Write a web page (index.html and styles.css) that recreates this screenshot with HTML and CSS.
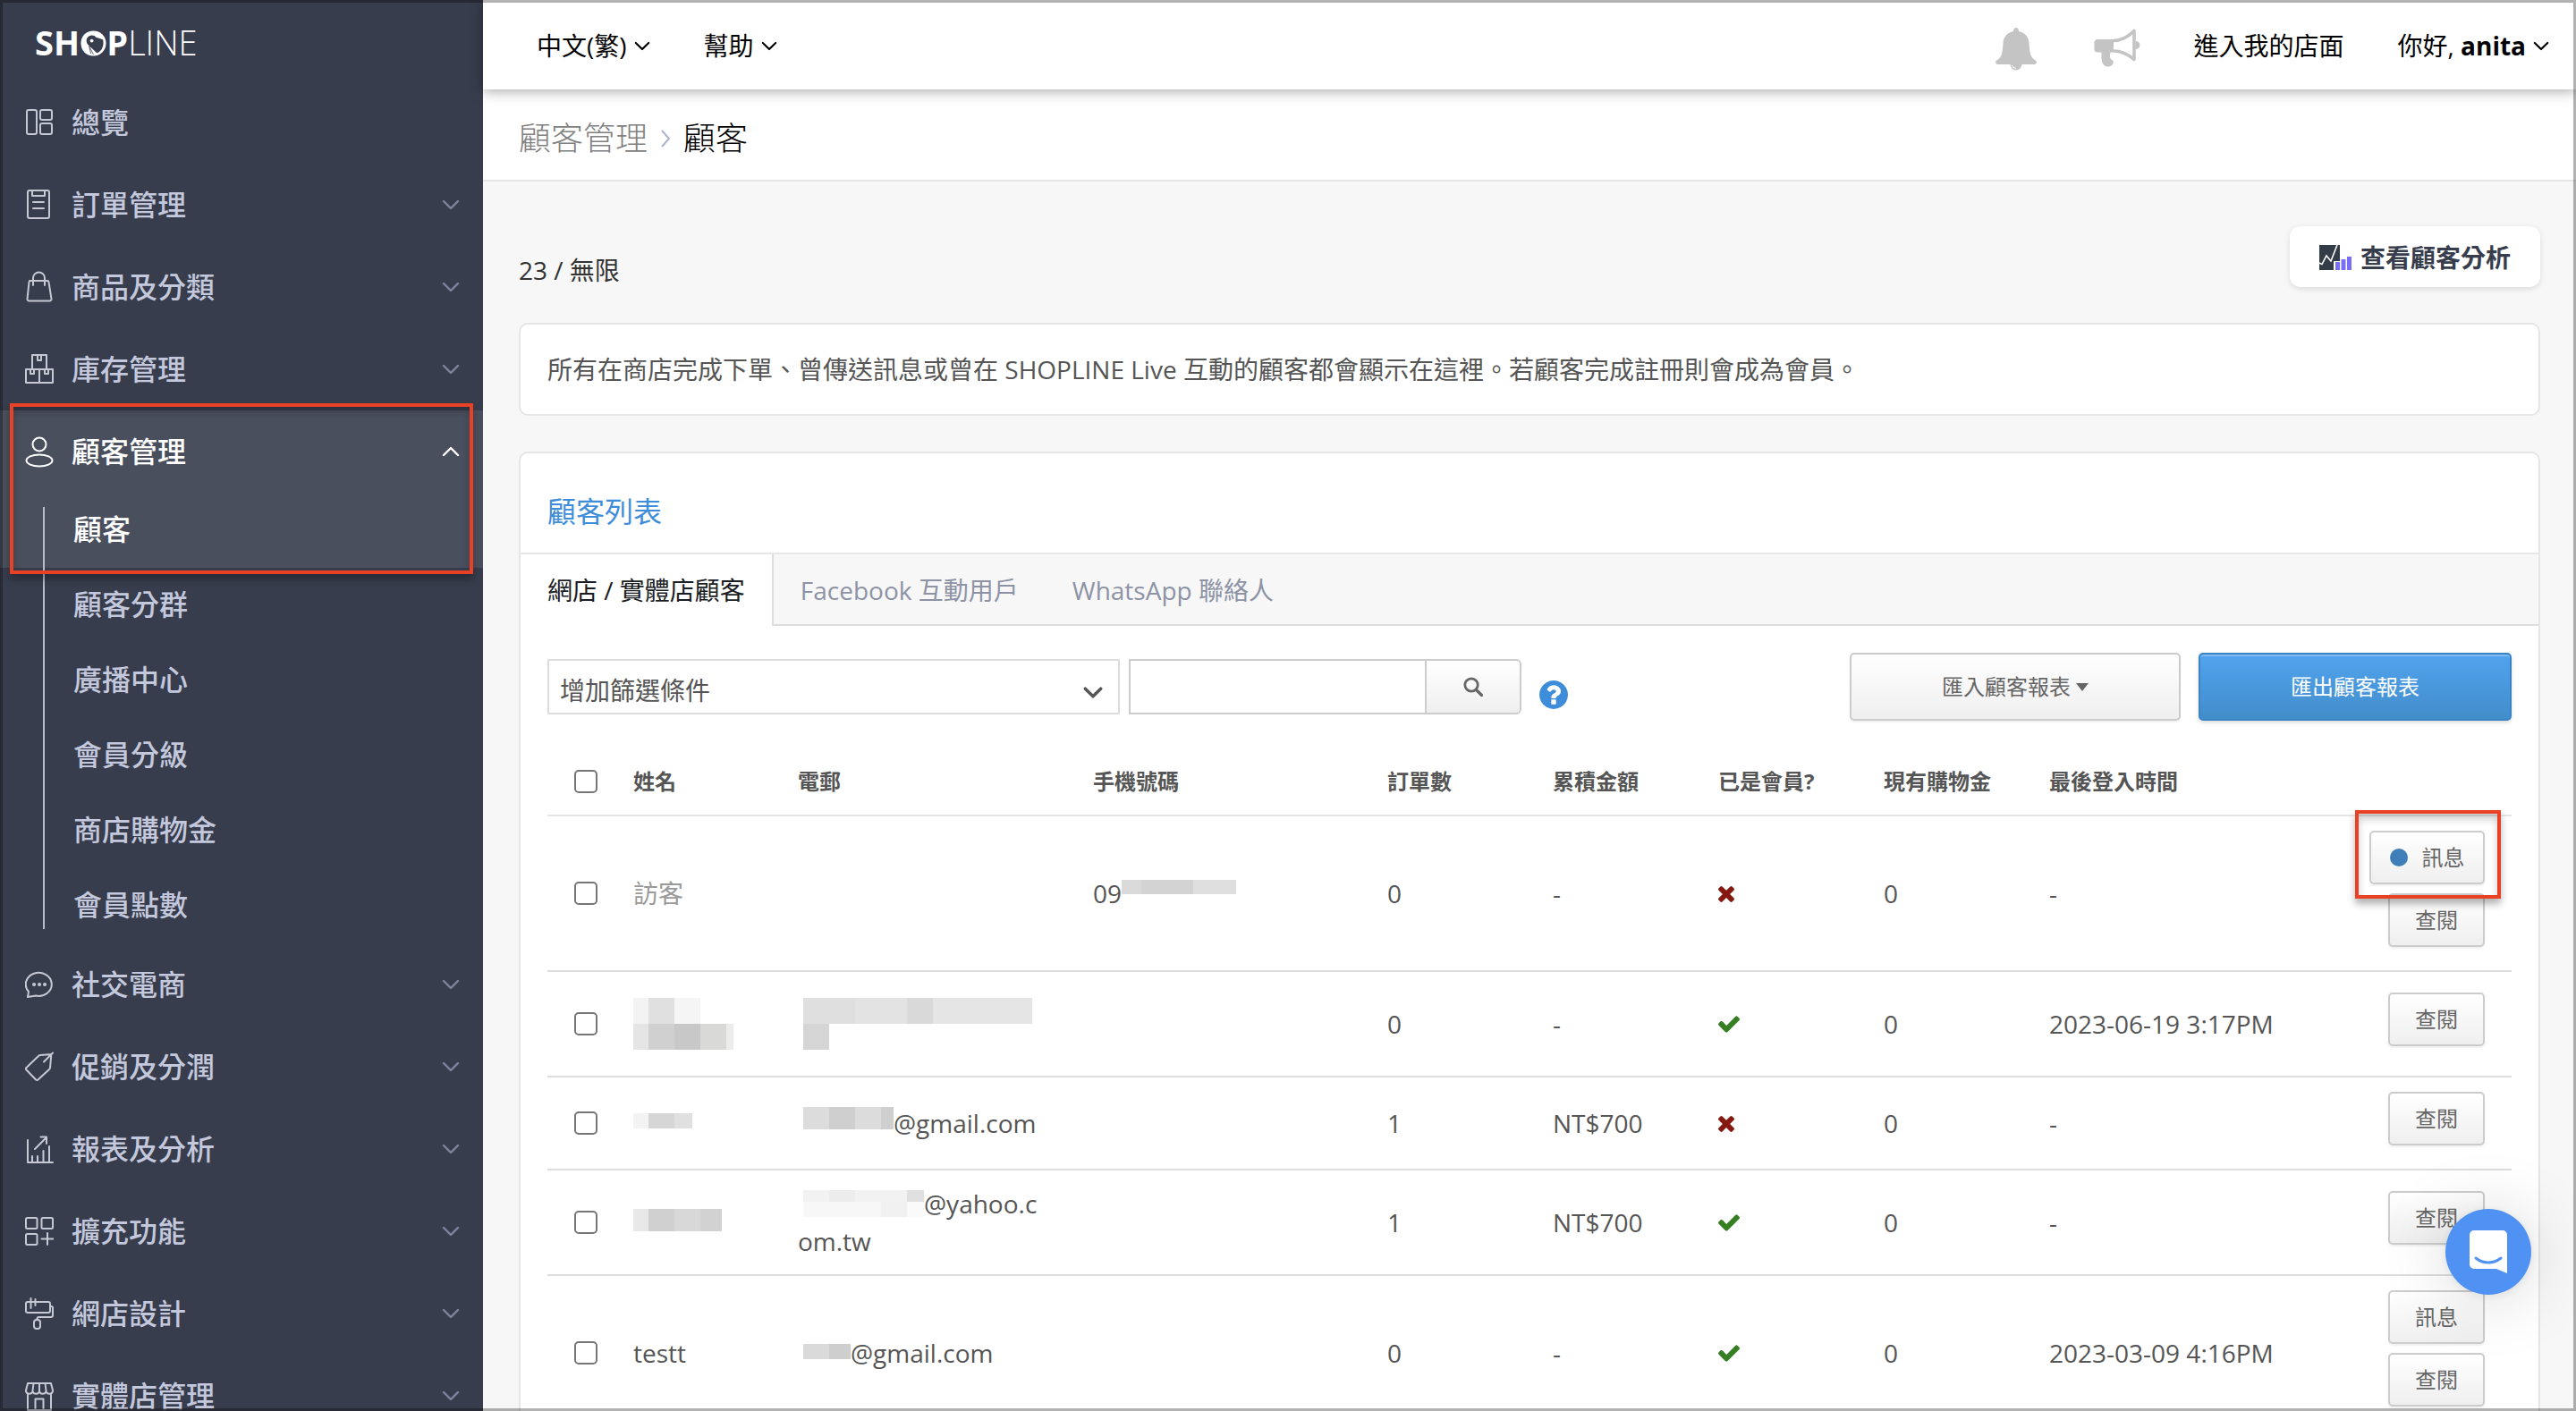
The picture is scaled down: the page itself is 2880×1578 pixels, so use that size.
FILE: index.html
```html
<!DOCTYPE html>
<html lang="zh-Hant">
<head>
<meta charset="utf-8">
<meta name="viewport" content="width=device-width, initial-scale=1">
<title>顧客 - SHOPLINE</title>
<link rel="stylesheet" href="styles.css">
</head>
<body>
<svg class="defs" width="0" height="0" aria-hidden="true">
  <symbol id="chevron" viewBox="0 0 20 12"><path d="M2 2l8 8 8-8" fill="none" stroke="currentColor" stroke-width="2.4" stroke-linecap="round" stroke-linejoin="round"/></symbol>
  <symbol id="check" viewBox="121 0 1550 1792"><path fill="currentColor" d="M1671 566q0 40-28 68l-724 724-136 136q-28 28-68 28t-68-28l-136-136-362-362q-28-28-28-68t28-68l136-136q28-28 68-28t68 28l294 295 656-657q28-28 68-28t68 28l136 136q28 28 28 68z"/></symbol>
  <symbol id="times" viewBox="302 0 1188 1792"><path fill="currentColor" d="M1490 1322q0 40-28 68l-136 136q-28 28-68 28t-68-28l-294-294-294 294q-28 28-68 28t-68-28l-136-136q-28-28-28-68t28-68l294-294-294-294q-28-28-28-68t28-68l136-136q28-28 68-28t68 28l294 294 294-294q28-28 68-28t68 28l136 136q28 28 28 68t-28 68l-294 294 294 294q28 28 28 68z"/></symbol>
</svg>

<div class="app">
  <aside class="sidebar">
    <a class="logo" href="#"><b>SH<span class="logo-o">O<svg class="logo-ball" viewBox="0 0 30 30" aria-hidden="true"><circle cx="15" cy="15" r="14.5" fill="#fff"/><path d="M7 10C9 5.500 15 4 18 8l8 2.500c1.500 7-1 13-6.500 15.500L10 17.500C7.500 16 6.500 13 7 10z" fill="#383d4d"/><circle cx="13" cy="12" r="2" fill="#fff"/><path d="M10 18l2 9M10 18l5 10M11 18l8 8" stroke="#383d4d" stroke-width=".8"/></svg></span>P</b>LINE</a>
    <nav class="nav" aria-label="主選單">
      <a class="nav-row" href="#"><svg class="nav-icon" viewBox="0 0 32 36"><rect x="2" y="4" width="11" height="27" rx="2"/><rect x="17" y="4" width="13" height="11" rx="2"/><rect x="17" y="19" width="13" height="12" rx="2"/></svg><span>總覽</span></a>
      <a class="nav-row" href="#"><svg class="nav-icon" viewBox="0 0 32 36"><rect x="3" y="2" width="24" height="31" rx="2"/><path d="M8 2v6h14V2M9 15h12M9 22h12"/></svg><span>訂單管理</span><svg class="nav-arrow"><use href="#chevron"/></svg></a>
      <a class="nav-row" href="#"><svg class="nav-icon" viewBox="0 0 32 36"><path d="M5 11h20a1.500 1.500 0 0 1 1.500 1.300l3 19a2 2 0 0 1-2 2.200H4.500a2 2 0 0 1-2-2.200l2-19"/><path d="M9 16V8a6.500 6.500 0 0 1 13 0v8"/></svg><span>商品及分類</span><svg class="nav-arrow"><use href="#chevron"/></svg></a>
      <a class="nav-row" href="#"><svg class="nav-icon" viewBox="0 0 32 36"><rect x="8" y="2" width="16" height="16"/><path d="M1 18h30v15H1zM16 18v15M14 2v6h4V2M6 18v5h4v-5M22 18v5h4v-5"/></svg><span>庫存管理</span><svg class="nav-arrow"><use href="#chevron"/></svg></a>
      <div class="nav-group">
        <div class="nav-current">
          <a class="nav-row" href="#"><svg class="nav-icon" viewBox="0 0 32 36"><circle cx="16" cy="10" r="7.500"/><ellipse cx="16" cy="28" rx="14.500" ry="6.500"/></svg><span>顧客管理</span><svg class="nav-arrow nav-arrow-up"><use href="#chevron"/></svg></a>
          <a class="nav-sub" href="#">顧客</a>
          <span class="marker marker-nav"></span>
        </div>
        <a class="nav-sub" href="#">顧客分群</a>
        <a class="nav-sub" href="#">廣播中心</a>
        <a class="nav-sub" href="#">會員分級</a>
        <a class="nav-sub" href="#">商店購物金</a>
        <a class="nav-sub" href="#">會員點數</a>
      </div>
      <a class="nav-row" href="#"><svg class="nav-icon" viewBox="0 0 32 36"><path d="M4 26A14.500 13 0 1 1 12 30.500L3 32z"/><path class="dots" d="M10 18h.1M16 18h.1M22 18h.1"/></svg><span>社交電商</span><svg class="nav-arrow"><use href="#chevron"/></svg></a>
      <a class="nav-row" href="#"><svg class="nav-icon" viewBox="0 0 32 36"><path d="M1.500 19L15 6c.5-.6 1-1 2-1l10-.8c1.500 0 2.200.8 2.200 2L28 19c0 1-.4 1.500-1 2L14.500 32.500c-.8.7-1.600.7-2.400 0L1.500 21.500c-.8-.8-.8-1.700 0-2.500zM31 2.500L21 12.500"/></svg><span>促銷及分潤</span><svg class="nav-arrow"><use href="#chevron"/></svg></a>
      <a class="nav-row" href="#"><svg class="nav-icon" viewBox="0 0 32 36"><path d="M3 8v25h28M8 33v-7M14 33v-7M20.500 33V20M27 33V15M11 18L24 5M17.500 4.500H24V12"/></svg><span>報表及分析</span><svg class="nav-arrow"><use href="#chevron"/></svg></a>
      <a class="nav-row" href="#"><svg class="nav-icon" viewBox="0 0 32 36"><rect x="1" y="3" width="12.500" height="12" rx="1.500"/><rect x="18.500" y="3" width="12.500" height="12" rx="1.500"/><rect x="1" y="21" width="12.500" height="12" rx="1.500"/><path d="M25 20v13M18.500 26.500h13"/></svg><span>擴充功能</span><svg class="nav-arrow"><use href="#chevron"/></svg></a>
      <a class="nav-row" href="#"><svg class="nav-icon" viewBox="0 0 32 36"><rect x="1" y="5" width="27" height="12" rx="2"/><path d="M6.500 1v11M11.500 2v7M28 10h1.500a1.500 1.500 0 0 1 1.500 1.500V20a2 2 0 0 1-2 2H15.500a2 2 0 0 0-2 2v1"/><rect x="10" y="25" width="7" height="10" rx="3"/></svg><span>網店設計</span><svg class="nav-arrow"><use href="#chevron"/></svg></a>
      <a class="nav-row" href="#"><svg class="nav-icon" viewBox="0 0 32 36"><path d="M3 4h26l2 8c0 5-7.500 5-7.500 0 0 5-7.500 5-7.500 0 0 5-7.500 5-7.500 0 0 5-7.500 5-7.500 0zM3 16v18h26V16M11.500 34V21.500h9V34M8.500 12l1-8M23.500 12l-1-8M16 12V4"/></svg><span>實體店管理</span><svg class="nav-arrow"><use href="#chevron"/></svg></a>
    </nav>
  </aside>

  <div class="page">
    <header class="topbar">
      <button class="top-item" type="button">中文(繁)<svg class="top-arrow"><use href="#chevron"/></svg></button>
      <button class="top-item" type="button">幫助<svg class="top-arrow"><use href="#chevron"/></svg></button>
      <span class="spacer"></span>
      <button class="top-item top-icon" type="button" aria-label="通知"><svg width="46" height="50" viewBox="0 0 46 50"><path d="M23 1c2 0 3 2 3 4 7 1.500 11 6 11.500 13 .5 12 2 17 8 20 1 2 0 4-2 4H2.500c-2 0-3-2-2-4 6-3 7.500-8 8-20C9 11 13 6.500 20 5c0-2 1-4 3-4z" fill="#c4c4c4"/><path d="M16.500 42a6.500 6.500 0 0 0 13 0z" fill="#c4c4c4"/><path d="M18.500 43a5 4 0 0 0 4.500 3.500" fill="none" stroke="#fff"/></svg></button>
      <button class="top-item top-icon" type="button" aria-label="公告"><svg width="52" height="46" viewBox="0 0 52 46"><path d="M4 12h18v14.500h-3.500c-1.500 6 0 8 3 9.500 1 2-1 6.500-6 6.500-6 0-7.500-6-7-16H4a3.500 3.500 0 0 1-3.500-3.500v-7A3.500 3.500 0 0 1 4 12z" fill="#c4c4c4"/><path d="M22 13.500c9 0 17-5 23-11v32c-6-5-14-9.500-23-9.500" fill="none" stroke="#c4c4c4" stroke-width="3.600" stroke-linejoin="round"/><path d="M47 14.500a4 4 0 0 1 0 8z" fill="#c4c4c4" stroke="#c4c4c4"/></svg></button>
      <a class="top-item" href="#">進入我的店面</a>
      <button class="top-item" type="button"><span>你好, <b>anita</b></span><svg class="top-arrow"><use href="#chevron"/></svg></button>
    </header>

    <nav class="crumbs" aria-label="路徑">
      <a href="#">顧客管理</a>
      <svg class="crumb-arrow" viewBox="0 0 12 20" aria-hidden="true"><path d="M2 1l8 9-8 9" fill="none" stroke="#aab2cc" stroke-width="2"/></svg>
      <span>顧客</span>
    </nav>

    <main class="content">
      <div class="summary">
        <p class="quota">23 / 無限</p>
        <button class="analytics" type="button"><svg width="36" height="28" viewBox="0 0 36 28" aria-hidden="true"><path d="M0 0h23v18h-7v10H0z" fill="#333d47"/><path d="M0 20l3 1.500L8 12l5 6L20 0" fill="none" stroke="#fff" stroke-width="1.600"/><path d="M18 19h5v9h-5zM24.500 16h5v12h-5zM31 13h5v15h-5z" fill="#7b6ef6"/></svg>查看顧客分析</button>
      </div>

      <p class="notice">所有在商店完成下單、曾傳送訊息或曾在 SHOPLINE Live 互動的顧客都會顯示在這裡。若顧客完成註冊則會成為會員。</p>

      <section class="card">
        <h1 class="card-title">顧客列表</h1>
        <div class="tabs" role="tablist">
          <button class="tab tab-on" type="button" role="tab" aria-selected="true">網店 / 實體店顧客</button>
          <button class="tab" type="button" role="tab">Facebook 互動用戶</button>
          <button class="tab" type="button" role="tab">WhatsApp 聯絡人</button>
        </div>

        <div class="card-body">
          <div class="toolbar">
            <div class="filter">
              <select aria-label="增加篩選條件"><option>增加篩選條件</option></select>
              <svg class="filter-arrow" viewBox="0 0 20 12" aria-hidden="true"><path d="M2 2l8 8 8-8" fill="none" stroke="#555" stroke-width="3.200" stroke-linecap="round" stroke-linejoin="round"/></svg>
            </div>
            <form class="search">
              <input type="text" aria-label="搜尋顧客">
              <button type="button" aria-label="搜尋"><svg width="22" height="22" viewBox="0 0 22 22"><circle cx="9" cy="9" r="7.200" fill="none" stroke="#666" stroke-width="2.800"/><path d="M14.500 14.500l6 6" stroke="#666" stroke-width="3.200" stroke-linecap="round"/></svg></button>
            </form>
            <svg class="help" viewBox="128 128 1536 1536" role="img" aria-label="說明"><path fill="#3e8ddb" d="M1024 1376v-192q0-14-9-23t-23-9h-192q-14 0-23 9t-9 23v192q0 14 9 23t23 9h192q14 0 23-9t9-23zm256-672q0-88-55.500-163t-138.500-116-170-41q-243 0-371 213-15 24 8 42l132 100q7 6 19 6 16 0 25-12 53-68 86-92 34-24 86-24 48 0 85.500 26t37.500 59q0 38-20 61t-68 45q-63 28-115.500 86.500t-52.500 125.500v36q0 14 9 23t23 9h192q14 0 23-9t9-23q0-19 21.500-49.500t54.500-49.500q32-18 49-28.500t46-35 44.500-48 28-60.500 12.500-81zm384 192q0 209-103 385.500t-279.500 279.500-385.500 103-385.500-103-279.500-279.500-103-385.500 103-385.500 279.500-279.500 385.500-103 385.500 103 279.500 279.500 103 385.500z"/></svg>
            <span class="spacer"></span>
            <button class="btn btn-import" type="button">匯入顧客報表<span class="caret"></span></button>
            <button class="btn btn-export" type="button">匯出顧客報表</button>
          </div>

          <table class="list">
            <colgroup><col class="c-tick"><col class="c-name"><col class="c-mail"><col class="c-phone"><col class="c-num"><col class="c-num"><col class="c-num"><col class="c-num"><col><col class="c-act"></colgroup>
            <thead>
              <tr>
                <th><input type="checkbox" aria-label="全選"></th><th>姓名</th><th>電郵</th><th>手機號碼</th><th>訂單數</th><th>累積金額</th><th>已是會員?</th><th>現有購物金</th><th>最後登入時間</th><th></th>
              </tr>
            </thead>
            <tbody>
              <tr>
                <td><input type="checkbox" aria-label="選取"></td>
                <td class="muted">訪客</td>
                <td></td>
                <td><span class="masked">09<svg width="128" height="30"><path fill="#dadada" d="M0 0h22v16H0z"/><path fill="#d3d3d3" d="M22 0h58v16H22z"/><path fill="#dedede" d="M80 0h48v16H80z"/></svg></span></td>
                <td>0</td><td>-</td><td><svg class="no"><use href="#times"/></svg></td><td>0</td><td>-</td>
                <td class="actions">
                  <div class="flagged"><button class="btn" type="button"><span class="dot"></span>訊息</button><span class="marker marker-btn"></span></div>
                  <button class="btn" type="button">查閱</button>
                </td>
              </tr>
              <tr>
                <td><input type="checkbox" aria-label="選取"></td>
                <td><svg class="mask" width="112" height="58"><path fill="#f3f3f3" d="M0 0h17v29H0z"/><path fill="#e0e0e0" d="M17 0h29v29H17z"/><path fill="#f5f5f5" d="M46 0h29v29H46z"/><path fill="#e5e5e5" d="M0 29h17v29H0z"/><path fill="#d0d0d0" d="M17 29h29v29H17z"/><path fill="#c8c8c8" d="M46 29h29v29H46z"/><path fill="#d9d9d7" d="M75 29h29v29H75z"/><path fill="#ececec" d="M104 29h8v29h-8z"/></svg></td>
                <td class="inset"><svg class="mask mask-lines" width="256" height="58"><path fill="#dfdfdf" d="M0 0h58v29H0z"/><path fill="#e3e3e3" d="M58 0h58v29H58z"/><path fill="#d9d9d9" d="M116 0h29v29h-29z"/><path fill="#e5e5e5" d="M145 0h111v29H145z"/><path fill="#d5d5d5" d="M0 29h29v29H0z"/></svg></td>
                <td></td><td>0</td><td>-</td><td><svg class="yes"><use href="#check"/></svg></td><td>0</td><td>2023-06-19 3:17PM</td>
                <td class="actions"><button class="btn" type="button">查閱</button></td>
              </tr>
              <tr>
                <td><input type="checkbox" aria-label="選取"></td>
                <td><svg class="mask" width="66" height="24"><path fill="#f3f3f3" d="M0 1h17v17H0z"/><path fill="#d6d6d6" d="M17 1h29v17H17z"/><path fill="#e0e0e0" d="M46 1h20v17H46z"/></svg></td>
                <td class="inset"><span class="masked"><svg width="101" height="36"><path fill="#dcdcdc" d="M0 0h29v25H0zM58 0h29v25H58z"/><path fill="#cfcfcf" d="M29 0h29v25H29zM87 0h14v25H87z"/></svg>@gmail.com</span></td>
                <td></td><td>1</td><td>NT$700</td><td><svg class="no"><use href="#times"/></svg></td><td>0</td><td>-</td>
                <td class="actions"><button class="btn" type="button">查閱</button></td>
              </tr>
              <tr>
                <td><input type="checkbox" aria-label="選取"></td>
                <td><svg class="mask" width="99" height="30"><path fill="#e8e8e8" d="M0 0h17v25H0z"/><path fill="#d0d0d0" d="M17 0h29v25H17z"/><path fill="#d8d8d8" d="M46 0h29v25H46z"/><path fill="#d2d2d2" d="M75 0h24v25H75z"/></svg></td>
                <td><span class="masked masked-inset"><svg width="135" height="30"><path fill="#f2f2f2" d="M0 0h29v13H0zM58 0h58v13H58z"/><path fill="#ececec" d="M29 0h29v13H29z"/><path fill="#e0e0e0" d="M116 0h19v13h-19z"/><path fill="#f7f7f7" d="M0 13h87v17H0z"/><path fill="#f1f1f1" d="M87 13h29v17H87z"/><path fill="#fafafa" d="M116 13h19v17h-19z"/></svg>@yahoo.c</span><br>om.tw</td>
                <td></td><td>1</td><td>NT$700</td><td><svg class="yes"><use href="#check"/></svg></td><td>0</td><td>-</td>
                <td class="actions"><button class="btn" type="button">查閱</button></td>
              </tr>
              <tr>
                <td><input type="checkbox" aria-label="選取"></td>
                <td>testt</td>
                <td class="inset"><span class="masked"><svg width="53" height="20"><path fill="#dadada" d="M0 0h29v17H0z"/><path fill="#cecece" d="M29 0h24v17H29z"/></svg>@gmail.com</span></td>
                <td></td><td>0</td><td>-</td><td><svg class="yes"><use href="#check"/></svg></td><td>0</td><td>2023-03-09 4:16PM</td>
                <td class="actions"><button class="btn" type="button">訊息</button><button class="btn" type="button">查閱</button></td>
              </tr>
            </tbody>
          </table>
        </div>
      </section>
    </main>
  </div>
</div>

<button class="chat" type="button" aria-label="客服訊息"><svg width="42" height="48" viewBox="0 0 42 48"><path d="M5 0h32a5 5 0 0 1 5 5v43l-12-5H5a5 5 0 0 1-5-5V5a5 5 0 0 1 5-5z" fill="#fff"/><path d="M7 31c8 6.500 20 6.500 28 0" fill="none" stroke="#4f92f3" stroke-width="3" stroke-linecap="round"/></svg></button>
<div class="frame"></div>
</body>
</html>
```

FILE: styles.css
```css
* { box-sizing: border-box; }

body {
  margin: 0;
  font-family: "Open Sans", "Noto Sans CJK TC", sans-serif;
  font-size: 28px;
  line-height: 42px;
  color: #555;
  background: #f7f7f7;
}

button, input, select { font: inherit; color: inherit; }
button { cursor: pointer; }
a { color: inherit; text-decoration: none; }
p, h1 { margin: 0; }
svg { flex: none; }
.defs { position: absolute; }
.spacer { flex: 1; }

.app {
  display: flex;
  height: 100vh;
  overflow: hidden;
}

/* Sidebar */
.sidebar {
  flex: none;
  width: 540px;
  overflow: hidden;
  background: #383d4d;
  color: #c3c8dc;
}

.logo {
  display: block;
  height: 91px;
  padding: 20px 0 0 39px;
  font-size: 38px;
  line-height: 54px;
  font-weight: 300;
  color: #fff;
}

.logo b { font-weight: 700; }
.logo-o { position: relative; }

.logo-ball {
  position: absolute;
  left: 1px;
  bottom: 10px;
  width: 29px;
  height: 29px;
}

.nav-row {
  display: flex;
  align-items: center;
  gap: 20px;
  height: 92px;
  padding: 0 26px 0 28px;
  font-size: 32px;
  line-height: 48px;
  font-weight: 500;
}

.nav-icon {
  width: 32px;
  height: 36px;
  fill: none;
  stroke: #c6c8d4;
  stroke-width: 2;
  stroke-linecap: round;
  stroke-linejoin: round;
}

.nav-icon .dots { stroke-width: 4; }

.nav-arrow {
  width: 20px;
  height: 12px;
  margin-left: auto;
  color: #7f859c;
}

.nav-arrow-up {
  transform: rotate(180deg);
  color: #fff;
}

.nav-group { position: relative; }

.nav-group::before {
  content: "";
  position: absolute;
  z-index: 1;
  left: 48px;
  top: 108px;
  bottom: 16px;
  width: 2px;
  background: #b9bdca;
}

.nav-current {
  position: relative;
  background: #4a4f5d;
  color: #fff;
}

.nav-current .nav-icon { stroke: #fff; }

.nav-sub {
  display: block;
  height: 84px;
  padding: 17px 0 19px 82px;
  font-size: 32px;
  line-height: 48px;
  font-weight: 500;
}

/* Red call-out outlines */
.marker {
  position: absolute;
  z-index: 2;
  border: 4px solid #e84125;
  box-shadow: 0 6px 8px rgba(0, 0, 0, .3), inset 0 6px 8px rgba(0, 0, 0, .2);
  pointer-events: none;
}

.marker-nav { inset: -8px 11px -7px 11px; }
.marker-btn { inset: -23px -18px -16px -16px; }

/* Top bar */
.page {
  flex: 1;
  min-width: 0;
}

.topbar {
  position: relative;
  z-index: 1;
  display: flex;
  align-items: center;
  gap: 60px;
  height: 100px;
  padding: 2px 30px 0 60px;
  background: #fff;
  color: #000;
  box-shadow: 0 2px 14px rgba(0, 0, 0, .35);
}

.top-item {
  display: flex;
  align-items: center;
  gap: 8px;
  padding: 0;
  border: 0;
  background: none;
}

.top-icon { padding-top: 7px; }
.top-icon + .top-icon { margin-left: 4px; }

.top-arrow {
  width: 18px;
  height: 11px;
}

.crumbs {
  display: flex;
  align-items: center;
  gap: 14px;
  padding: 28px 40px 19px;
  border-bottom: 2px solid #e5e5e5;
  background: #fff;
  font-size: 36px;
  line-height: 54px;
  font-weight: 300;
  color: #000;
}

.crumbs a { color: #808080; }

.crumb-arrow {
  width: 12px;
  height: 20px;
}

/* Content */
.content {
  display: flex;
  flex-direction: column;
  gap: 40px;
  padding: 50px 40px;
}

.summary {
  display: flex;
  align-items: flex-end;
  justify-content: space-between;
}

.quota {
  line-height: 38px;
  color: #333;
}

.analytics {
  display: flex;
  align-items: center;
  gap: 10px;
  height: 68px;
  padding: 2px 33px 0;
  border: 0;
  border-radius: 12px;
  background: #fff;
  box-shadow: 0 2px 6px rgba(0, 0, 0, .12);
  font-weight: 700;
  color: #383d4d;
}

.notice {
  padding: 29px 30px;
  border: 2px solid #e6e6e6;
  border-radius: 10px;
  background: #fff;
}

.card {
  border: 2px solid #e6e6e6;
  border-radius: 10px;
  background: #fff;
}

.card-title {
  padding: 41px 30px 22px;
  border-bottom: 2px solid #e6e6e6;
  font-size: 32px;
  line-height: 48px;
  font-weight: 400;
  color: #3e8ddb;
}

.tabs {
  display: flex;
  height: 80px;
  background: linear-gradient(#ddd, #ddd) bottom / 100% 2px no-repeat #f7f7f7;
}

.tab {
  padding: 0 30px;
  border: 0;
  background: none;
  color: #8d93a5;
}

.tab-on {
  border-right: 2px solid #ddd;
  background: #fff;
  color: #1b1d24;
}

.card-body { padding: 30px; }

.toolbar {
  display: flex;
  align-items: center;
  margin-bottom: 30px;
}

.filter {
  position: relative;
  width: 640px;
  margin-right: 10px;
}

.filter select {
  display: block;
  width: 100%;
  height: 62px;
  padding: 8px 50px 0 12px;
  border: 2px solid #ddd;
  border-radius: 0;
  background: #fff;
  appearance: none;
}

.filter-arrow {
  position: absolute;
  right: 19px;
  top: 31px;
  width: 22px;
  height: 13px;
}

.search {
  display: flex;
  width: 439px;
  height: 62px;
}

.search input {
  flex: 1;
  min-width: 0;
  padding: 0 12px;
  border: 2px solid #ccc;
  border-right: 0;
  border-radius: 0;
}

.search button {
  display: flex;
  align-items: center;
  justify-content: center;
  width: 108px;
  border: 2px solid #ccc;
  border-radius: 0 6px 6px 0;
  background: linear-gradient(#fff, #efefef);
}

.help {
  align-self: flex-end;
  width: 32px;
  height: 32px;
  margin: 0 0 13px 20px;
}

.btn {
  display: inline-flex;
  align-items: center;
  justify-content: center;
  height: 60px;
  padding: 0 28px;
  border: 2px solid #ccc;
  border-radius: 5px;
  background: linear-gradient(#fff, #efefef);
  box-shadow: 0 2px 2px rgba(0, 0, 0, .06);
  font-size: 24px;
  line-height: 36px;
  color: #666;
}

.btn-import {
  gap: 6px;
  width: 370px;
  height: 76px;
  margin-right: 20px;
}

.caret {
  border: 7px solid transparent;
  border-top: 9px solid #666;
  border-bottom: 0;
}

.btn-export {
  width: 350px;
  height: 76px;
  border-color: #3a84c6;
  background: linear-gradient(#51a3ee, #428dcb);
  box-shadow: inset 0 2px 0 rgba(255, 255, 255, .25), 0 2px 4px rgba(0, 0, 0, .15);
  color: #fff;
}

/* Customer list */
.list {
  width: 100%;
  table-layout: fixed;
  border-spacing: 0;
}

.c-tick { width: 80px; }
.c-name { width: 184px; }
.c-mail { width: 330px; }
.c-phone { width: 329px; }
.c-num { width: 185px; }
.c-act { width: 200px; }

.list th {
  padding: 20px 16px 19px;
  border-bottom: 2px solid #e5e5e5;
  font-size: 24px;
  line-height: 36px;
  font-weight: 700;
  text-align: left;
}

.list td {
  padding: 16px;
  border-bottom: 2px solid #ddd;
  vertical-align: middle;
}

.list th:first-child,
.list td:first-child { padding-left: 30px; }

.list input {
  display: block;
  width: 26px;
  height: 26px;
  margin: 0;
  border: 2px solid #767676;
  border-radius: 5px;
  background: #fff;
  appearance: none;
}

.list .muted { color: #999; }
.list .inset { padding-left: 22px; }
.mask { display: block; }
.mask-lines { margin: 13px 0; }

.masked {
  display: inline-flex;
  align-items: center;
  vertical-align: top;
}

.masked-inset { padding-left: 6px; }

.yes, .no {
  display: block;
  height: 28px;
}

.yes { width: 24px; color: #357f22; }
.no { width: 18px; color: #85190f; }

.list .actions {
  padding: 16px 30px 16px 0;
  text-align: right;
}

.actions .btn {
  display: flex;
  width: 108px;
  margin: 0 0 10px auto;
  padding: 0;
}

.flagged {
  position: relative;
  width: 129px;
  margin-left: auto;
}

.flagged .btn {
  gap: 16px;
  width: 129px;
}

.dot {
  width: 20px;
  height: 20px;
  border-radius: 50%;
  background: #3f7fb9;
}

/* Floating pieces */
.chat {
  position: fixed;
  right: 50px;
  bottom: 130px;
  display: flex;
  align-items: center;
  justify-content: center;
  width: 96px;
  height: 96px;
  border: 0;
  border-radius: 50%;
  background: #4f92f3;
  box-shadow: 0 4px 80px rgba(0, 0, 0, .16), 0 2px 12px rgba(0, 0, 0, .08);
}

.frame {
  position: fixed;
  z-index: 3;
  inset: 0;
  border: 3px solid rgba(0, 0, 0, .3);
  pointer-events: none;
}
```
